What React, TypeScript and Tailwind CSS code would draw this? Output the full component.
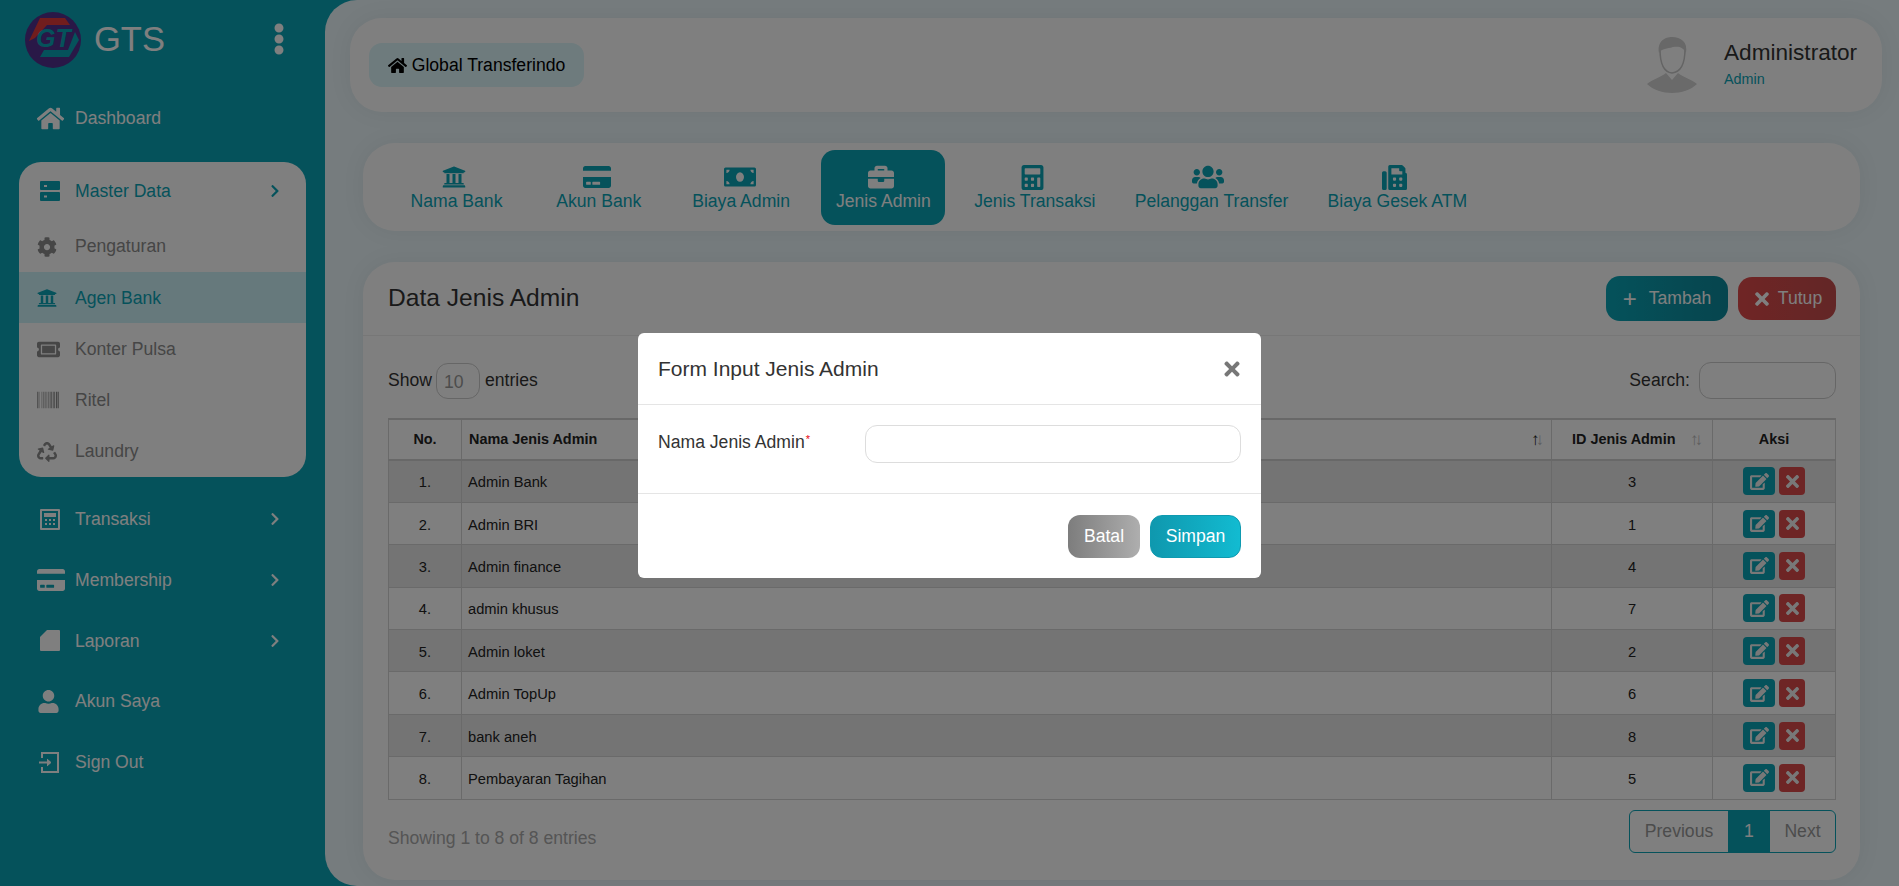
import type { ReactNode } from "react"
import {
  FaBarcode,
  FaBriefcase,
  FaCalculator,
  FaChevronRight,
  FaCog,
  FaCreditCard,
  FaEdit,
  FaEllipsisV,
  FaFax,
  FaHome,
  FaMoneyBill,
  FaRecycle,
  FaTicketAlt,
  FaTimes,
  FaUniversity,
  FaUser,
  FaUsers,
} from "react-icons/fa"

const rows = [
  { no: 1, name: "Admin Bank", id: 3 },
  { no: 2, name: "Admin BRI", id: 1 },
  { no: 3, name: "Admin finance", id: 4 },
  { no: 4, name: "admin khusus", id: 7 },
  { no: 5, name: "Admin loket", id: 2 },
  { no: 6, name: "Admin TopUp", id: 6 },
  { no: 7, name: "bank aneh", id: 8 },
  { no: 8, name: "Pembayaran Tagihan", id: 5 },
]

const tabs = [
  { label: "Nama Bank", icon: <FaUniversity size={24} className="-ml-[5px]" /> },
  { label: "Akun Bank", icon: <FaCreditCard size={28} className="-ml-[4px]" /> },
  { label: "Biaya Admin", icon: <FaMoneyBill size={32} className="-ml-[3px]" /> },
  { label: "Jenis Admin", icon: <FaBriefcase size={26} className="-ml-[4px]" />, active: true },
  { label: "Jenis Transaksi", icon: <FaCalculator size={25} className="-ml-[4px]" /> },
  { label: "Pelanggan Transfer", icon: <FaUsers size={32} className="-ml-[7px]" /> },
  { label: "Biaya Gesek ATM", icon: <FaFax size={25} className="-ml-[5px]" /> },
]

function Logo() {
  return (
    <svg width="56" height="56" viewBox="0 0 56 56">
      <circle cx="28" cy="28" r="28" fill="#52308f" />
      <path d="M4 29 L15 6 L40 6 L45 13 L22 13 L10 26 Z" fill="#e23a3a" />
      <path d="M15 45 L44 45 L54 28 L50 20 L43 38 L19 38 Z" fill="#0aa4b6" />
      <text x="11" y="35" fontSize="25" fontWeight="700" fontStyle="italic" fontFamily="Liberation Sans, sans-serif" fill="#0aa4b6">
        GT
      </text>
    </svg>
  )
}

function Avatar() {
  return (
    <svg width="50" height="56" viewBox="0 0 50 56">
      <path d="M0 47 C6 42 14 40 19 36 L25 43 L31 36 C36 40 44 42 50 47 C44 53 34 56 25 56 C16 56 6 53 0 47 Z" fill="#d4d4d4" />
      <path d="M13 12 C13 24 15 35 25 36 C35 35 38 24 38 12" fill="none" stroke="#c8c8c8" strokeWidth="1.5" />
      <path d="M12 16 C10 4 18 0 25 0 C34 0 41 5 39 16 C36 10 32 9 26 10 C20 12 15 11 12 16 Z" fill="#d0d0d0" />
    </svg>
  )
}

function ServerIcon() {
  return (
    <svg width="20" height="20" viewBox="0 0 20 20" fill="currentColor">
      <path fillRule="evenodd" d="M1 0H19a1 1 0 011 1V8a1 1 0 01-1 1H1a1 1 0 01-1-1V1a1 1 0 011-1ZM4 4V6H7V4Z" />
      <path fillRule="evenodd" d="M1 11H19a1 1 0 011 1V19a1 1 0 01-1 1H1a1 1 0 01-1-1V12a1 1 0 011-1ZM4 14.5V16.5H7V14.5Z" />
    </svg>
  )
}

function CalcOutline() {
  return (
    <svg width="20" height="21" viewBox="0 0 20 21" fill="currentColor">
      <path fillRule="evenodd" d="M1 0H19a1 1 0 011 1V20a1 1 0 01-1 1H1a1 1 0 01-1-1V1a1 1 0 011-1ZM2 2V19H18V2Z" />
      <rect x="4" y="4" width="12" height="4" />
      <rect x="5" y="10" width="2" height="2" />
      <rect x="9" y="10" width="2" height="2" />
      <rect x="13" y="10" width="2" height="2" />
      <rect x="5" y="14" width="2" height="2" />
      <rect x="9" y="14" width="2" height="2" />
      <rect x="13" y="14" width="2" height="2" />
    </svg>
  )
}

function ReportIcon() {
  return (
    <svg width="20" height="21" viewBox="0 0 20 21" fill="currentColor">
      <path d="M7 0H19a1 1 0 011 1V20a1 1 0 01-1 1H1a1 1 0 01-1-1V7Z" />
    </svg>
  )
}

function SignInIcon() {
  return (
    <svg width="21" height="21" viewBox="0 0 21 21" fill="none" stroke="currentColor" strokeWidth="2">
      <path d="M3 6V1H19V20H3V15" />
      <path d="M0 10.5H11" />
      <path d="M8 7L12 10.5L8 14" fill="currentColor" strokeWidth="1" />
    </svg>
  )
}

function NavRow({ icon, label, arrow, cls }: { icon: ReactNode; label: string; arrow?: boolean; cls?: string }) {
  return (
    <div className={`flex items-center pl-[37px] pt-[2px] ${cls ?? "h-[60.7px]"}`}>
      <div className="flex w-[38px] shrink-0 items-center">{icon}</div>
      <span>{label}</span>
      {arrow && <FaChevronRight size={14} className="ml-auto mr-[43px]" />}
    </div>
  )
}

function SubRow({ icon, label, active, cls }: { icon: ReactNode; label: string; active?: boolean; cls?: string }) {
  return (
    <div className={`flex items-center pl-[18px] pt-[1px] ${cls ?? "h-[51px]"} ${active ? "bg-[#cdf3f9] text-[#0aa4b6]" : "text-[#8c8c8c]"}`}>
      <div className="flex w-[38px] shrink-0 items-center">{icon}</div>
      <span>{label}</span>
    </div>
  )
}

function Sidebar() {
  return (
    <aside className="w-[325px] shrink-0 text-white">
      <div className="flex h-[87px] items-start pl-[25px] pt-[12px]">
        <Logo />
        <span className="ml-[13px] mt-[7px] text-[34.5px] leading-[40px]">GTS</span>
        <FaEllipsisV size={32} className="ml-auto mr-[30px] mt-[11px]" />
      </div>
      <NavRow icon={<FaHome size={25} className="ml-[1px] scale-110" />} label="Dashboard" cls="h-[60px]" />
      <div className="ml-[19px] mt-[15px] w-[287px] overflow-hidden rounded-[22px] bg-white text-[#0aa4b6]">
        <div className="flex h-[58px] items-center pl-[21px]">
          <div className="w-[35px]">
            <ServerIcon />
          </div>
          <span>Master Data</span>
          <FaChevronRight size={14} className="ml-auto mr-[24px]" />
        </div>
        <SubRow icon={<FaCog size={20} />} label="Pengaturan" cls="h-[52px]" />
        <SubRow icon={<FaUniversity size={20} />} label="Agen Bank" active />
        <SubRow icon={<FaTicketAlt size={23} />} label="Konter Pulsa" />
        <SubRow icon={<FaBarcode size={22} />} label="Ritel" />
        <SubRow icon={<FaRecycle size={20} />} label="Laundry" cls="h-[52px]" />
      </div>
      <div className="mt-[11px]">
        <NavRow icon={<div className="ml-[3px]"><CalcOutline /></div>} label="Transaksi" arrow />
        <NavRow icon={<FaCreditCard size={28} />} label="Membership" arrow />
        <NavRow icon={<div className="ml-[3px]"><ReportIcon /></div>} label="Laporan" arrow />
        <NavRow icon={<FaUser size={23} />} label="Akun Saya" />
        <NavRow icon={<div className="ml-[2px]"><SignInIcon /></div>} label="Sign Out" />
      </div>
    </aside>
  )
}

function HeaderCard() {
  return (
    <div className="ml-[25px] mr-[17px] flex h-[94px] items-center justify-between rounded-[32px] bg-white pl-[19px] pr-[26px] shadow-[0_0_25px_rgba(0,0,0,0.06)]">
      <div className="flex h-[44px] w-[215px] items-center justify-center gap-[5px] rounded-[13px] bg-[#dcf6fa] text-[17.6px] text-black">
        <FaHome size={19} />
        Global Transferindo
      </div>
      <div className="flex items-center">
        <Avatar />
        <div className="-mt-[3px] ml-[27px] w-[132px]">
          <div className="whitespace-nowrap text-[22.6px] leading-[28px] text-[#333]">Administrator</div>
          <div className="mt-[3px] text-[14.4px] leading-[18px] text-[#0aa4b6]">Admin</div>
        </div>
      </div>
    </div>
  )
}

function TabsCard() {
  return (
    <div className="ml-[38px] mr-[39px] mt-[31px] flex h-[88px] items-center gap-[18.3px] rounded-[32px] bg-white pl-[31.5px] shadow-[0_0_25px_rgba(0,0,0,0.06)]">
      {tabs.map((t) => (
        <div
          key={t.label}
          className={`flex h-[75px] min-w-[124px] flex-col items-center justify-end rounded-[14px] px-[10.5px] pb-[12.5px] text-[17.6px] ${
            t.active ? "bg-[#0aa4b6] text-white" : "text-[#0aa4b6]"
          }`}
        >
          <div className="flex h-[26px] items-center">{t.icon}</div>
          <span className="whitespace-nowrap leading-[22px]">{t.label}</span>
        </div>
      ))}
    </div>
  )
}

function SortArrows({ up }: { up?: boolean }) {
  return (
    <span className="ml-auto flex text-[17px] font-normal leading-none tracking-[-4px]">
      <span className={up ? "text-[#222]" : "text-[#bbb]"}>↑</span>
      <span className="text-[#bbb]">↓</span>
    </span>
  )
}

function DataTable() {
  return (
    <table className="mt-[19px] w-full table-fixed border-collapse text-[14.7px] text-[#222]">
      <colgroup>
        <col className="w-[73px]" />
        <col />
        <col className="w-[161px]" />
        <col className="w-[123px]" />
      </colgroup>
      <thead>
        <tr className="h-[41px] border-y-2 border-[#d0d0d0] text-[14.4px]">
          <th className="border-x border-[#d5d5d5] font-bold">No.</th>
          <th className="border-x border-[#d5d5d5] px-[7px] text-left font-bold">
            <div className="flex items-center pr-[4px]">
              Nama Jenis Admin
              <SortArrows up />
            </div>
          </th>
          <th className="border-x border-[#d5d5d5] px-[7px] text-left font-bold">
            <div className="flex items-center pl-[13px] pr-[6px]">
              ID Jenis Admin
              <SortArrows />
            </div>
          </th>
          <th className="border-x border-[#d5d5d5] font-bold">Aksi</th>
        </tr>
      </thead>
      <tbody>
        {rows.map((r) => (
          <tr key={r.no} className={`h-[42.4px] border-b border-[#d5d5d5] ${r.no % 2 === 1 ? "bg-[#e9e9e9]" : "bg-white"}`}>
            <td className="border-x border-[#d5d5d5] pt-[2px] text-center">{r.no}.</td>
            <td className="border-x border-[#d5d5d5] px-[6px] pt-[2px]">{r.name}</td>
            <td className="border-x border-[#d5d5d5] pt-[2px] text-center">{r.id}</td>
            <td className="border-x border-[#d5d5d5]">
              <div className="flex justify-center gap-[4px]">
                <span className="flex h-[28px] w-[32px] items-center justify-center rounded-[4px] bg-[#0aa4b6] text-[#f0f0f0]">
                  <FaEdit size={19} />
                </span>
                <span className="flex h-[28px] w-[26px] items-center justify-center rounded-[4px] bg-[#dc4a4a] text-[#f0f0f0]">
                  <FaTimes size={19} />
                </span>
              </div>
            </td>
          </tr>
        ))}
      </tbody>
    </table>
  )
}

function DataCard() {
  return (
    <div className="ml-[38px] mr-[39px] mt-[31px] h-[618px] rounded-[32px] bg-white shadow-[0_0_25px_rgba(0,0,0,0.06)]">
      <div className="flex h-[74px] items-center border-b border-[#eee] pl-[25px] pr-[24px]">
        <h1 className="text-[24.6px] font-normal text-[#333]">Data Jenis Admin</h1>
        <button className="ml-auto flex h-[45px] w-[122px] items-center justify-center gap-[12px] rounded-[14px] bg-gradient-to-r from-[#0aa4b6] to-[#0d8a9c] text-[17.6px] text-white">
          <span className="text-[24px] font-light leading-none">+</span>
          Tambah
        </button>
        <button className="ml-[10px] flex h-[43px] w-[98px] items-center justify-center gap-[6px] rounded-[14px] bg-gradient-to-r from-[#e04a4a] to-[#c64d4d] text-[17.6px] text-white">
          <FaTimes size={20} />
          Tutup
        </button>
      </div>
      <div className="pl-[25px] pr-[24px]">
        <div className="mt-[26px] flex h-[37px] items-center text-[17.6px] text-[#333]">
          <span>Show</span>
          <span className="ml-[4px] mr-[5px] flex h-[36px] w-[44px] items-center rounded-[12px] border border-[#ccc] pl-[7px] pt-[3px] text-[#999]">10</span>
          <span>entries</span>
          <span className="ml-auto mr-[9px]">Search:</span>
          <span className="h-[37px] w-[137px] rounded-[12px] border border-[#ccc]" />
        </div>
        <DataTable />
        <div className="mt-[10px] flex items-center justify-between text-[17.6px]">
          <span className="mt-[15px] text-[#aaa]">Showing 1 to 8 of 8 entries</span>
          <div className="flex h-[43px] overflow-hidden rounded-[6px] border border-[#0aa4b6] text-[#999]">
            <span className="flex w-[98px] items-center justify-center">Previous</span>
            <span className="flex w-[42px] items-center justify-center bg-[#0aa4b6] text-white">1</span>
            <span className="flex w-[65px] items-center justify-center">Next</span>
          </div>
        </div>
      </div>
    </div>
  )
}

function Modal() {
  return (
    <div className="fixed inset-0 bg-black/50">
      <div className="absolute left-[638px] top-[333px] w-[623px] rounded-[6px] bg-white text-[17.6px] text-[#333]">
        <div className="flex h-[72px] items-center justify-between border-b border-[#e5e5e5] pl-[20px] pr-[18px]">
          <h2 className="text-[21px] font-normal">Form Input Jenis Admin</h2>
          <FaTimes size={22} className="text-[#777]" />
        </div>
        <div className="flex h-[89px] items-start border-b border-[#e5e5e5] pl-[20px] pr-[20px] pt-[20px]">
          <label className="w-[207px] pt-[4px] leading-[26px]">
            Nama Jenis Admin<sup className="ml-[1px] text-[11px] text-red-600">*</sup>
          </label>
          <input className="h-[38px] flex-1 rounded-[12px] border border-[#ddd] bg-white" />
        </div>
        <div className="flex h-[84px] items-center justify-end gap-[10px] pr-[20px]">
          <button className="h-[43px] w-[72px] rounded-[12px] bg-gradient-to-r from-[#7d7d7d] to-[#aeaeae] text-white">Batal</button>
          <button className="h-[43px] w-[91px] rounded-[12px] border border-[#0f9ab0] bg-gradient-to-r from-[#0f98ae] to-[#12bbd1] text-white">Simpan</button>
        </div>
      </div>
    </div>
  )
}

export default function App() {
  return (
    <div className="flex h-screen overflow-hidden bg-[#0aa4b6] font-['Liberation_Sans',Arial,sans-serif] text-[17.6px]">
      <Sidebar />
      <main className="h-screen flex-1 rounded-l-[32px] bg-[#ecf8fc] pt-[18px]">
        <HeaderCard />
        <TabsCard />
        <DataCard />
      </main>
      <Modal />
    </div>
  )
}
